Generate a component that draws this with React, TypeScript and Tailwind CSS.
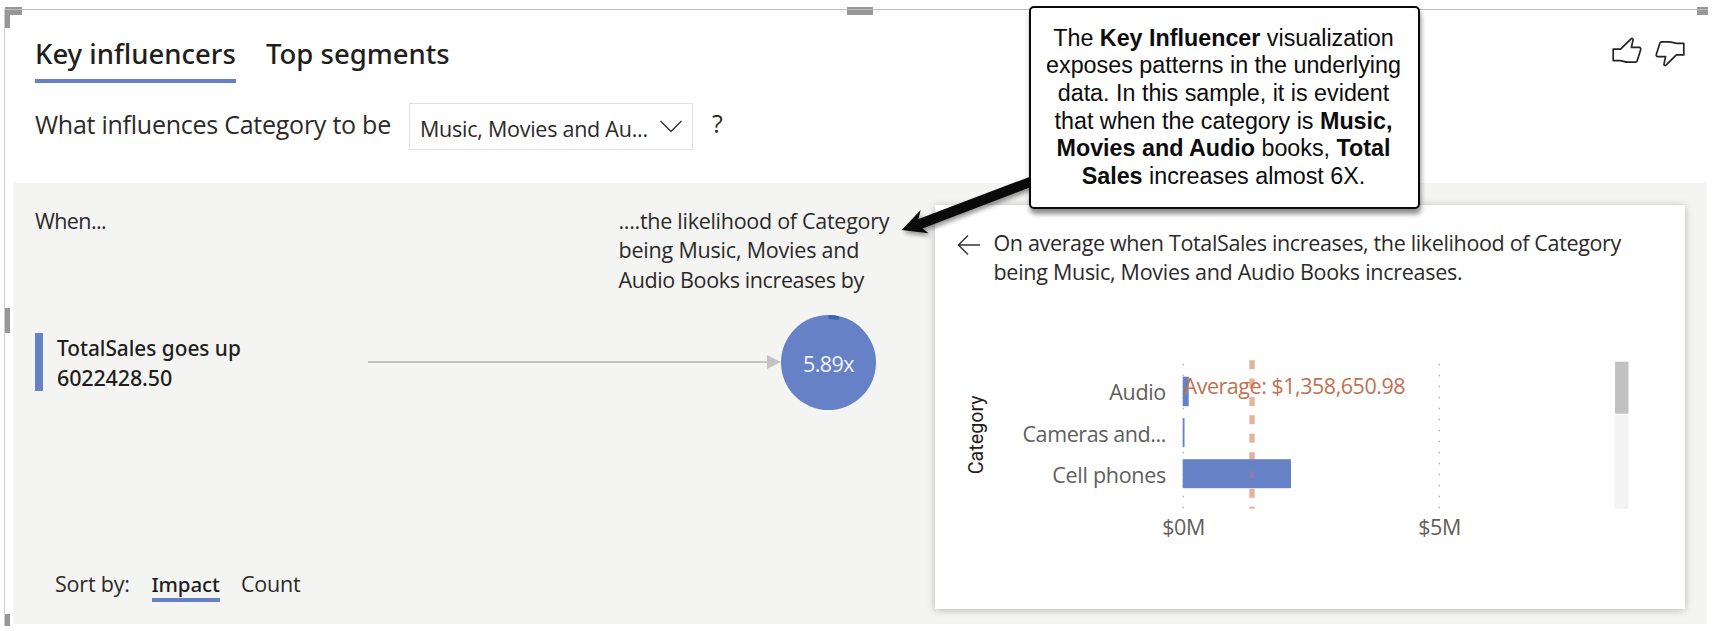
import React from "react";

const gridRows = Array.from({ length: 14 }, (_, i) => 363.6 + i * 11);
const averageDashes = [360, 378.3, 396.7, 415, 433.5, 452, 470.4, 488.6];

function Handle({ className }: { className: string }) {
  return <div className={`absolute bg-[#979797] ${className}`} />;
}

function SelectionFrame() {
  return (
    <>
      <Handle className="left-[5px] top-[7px] h-[8px] w-[17px]" />
      <Handle className="left-[5px] top-[15px] h-[13px] w-[4.5px]" />
      <Handle className="left-[847px] top-[7px] h-[8px] w-[26px]" />
      <Handle className="left-[1697px] top-[7px] h-[8px] w-[11px]" />
      <Handle className="left-[5px] top-[308px] h-[25px] w-[4.5px]" />
      <Handle className="left-[5px] top-[614px] h-[12px] w-[4.5px]" />
      <div className="absolute left-[4px] top-[9px] h-px w-[1704px] bg-[#bcbcbc]" />
      <div className="absolute left-[4px] top-[9px] h-[617px] w-px bg-[#cfcfcf]" />
    </>
  );
}

function Thumb({ className }: { className: string }) {
  return (
    <svg viewBox="0 0 30 27" className={`h-[27px] w-[30px] ${className}`} fill="none" stroke="#252423" strokeWidth="1.7" strokeLinejoin="round">
      <path d="M1.2 12.2H8.6L19 1.8C20 1 21.4 1.7 21 3.1L19.4 10.4H27C28.3 10.4 29 11.2 28.7 12.4L25.2 23.7C24.9 24.8 24.3 25.2 23.3 25.2H16C12.5 25.1 10.8 23.6 8 23.6H1.2Z" />
    </svg>
  );
}

function Header() {
  return (
    <header className="flex h-[183px] justify-between pl-[35px] pr-[28px]">
      <div className="flex flex-col">
        <nav className="mt-[32px] flex gap-[30px] text-[27.5px] font-medium leading-[44px] text-[#1f1e1d] [font-family:'Noto_Sans','Open_Sans',sans-serif]">
          <span className="h-[51px] w-[201px] whitespace-nowrap border-b-4 border-[#6681c5]">Key influencers</span>
          <span className="whitespace-nowrap">Top segments</span>
        </nav>
        <div className="mt-[20px] flex">
          <span className="mt-[3.5px] w-[374px] whitespace-nowrap text-[25px] leading-[34px] tracking-[-0.25px]">What influences Category to be</span>
          <div className="flex h-[47px] w-[284px] items-center justify-between border border-[#e2e2e2] pl-[10px] pr-[10px] text-[21.5px] leading-[29px] tracking-[-0.25px]">
            <span className="mt-[4px]">Music, Movies and Au...</span>
            <svg viewBox="0 0 22 13" className="h-[13px] w-[22px]" fill="none" stroke="#333" strokeWidth="1.4">
              <path d="M0.5 1L11 11.6L21.5 1" />
            </svg>
          </div>
          <span className="ml-[19px] mt-[3px] text-[25px] leading-[34px]">?</span>
        </div>
      </div>
      <div className="flex gap-[13.5px] pt-[37px]">
        <Thumb className="" />
        <Thumb className="mt-[3px] rotate-180" />
      </div>
    </header>
  );
}

function Influencers() {
  return (
    <div className="flex w-[921.5px] flex-col pl-[22px] pt-[23px] text-[21.5px] leading-[29.33px]">
      <div className="flex h-[88px]">
        <span className="w-[583.5px] tracking-[-0.6px]">When...</span>
        <div className="flex flex-col whitespace-nowrap">
          <span className="tracking-[-0.28px]">....the likelihood of Category</span>
          <span className="tracking-[-0.2px]">being Music, Movies and</span>
          <span className="tracking-[-0.38px]">Audio Books increases by</span>
        </div>
      </div>
      <div className="mt-[20.7px] flex h-[95px] items-center">
        <div className="h-[58.5px] w-[7.5px] bg-[#6681c5]" />
        <div className="ml-[14.5px] mt-[2px] flex w-[311px] flex-col text-[20.8px] font-medium text-[#1f1e1d] [font-family:'Noto_Sans','Open_Sans',sans-serif]">
          <span>TotalSales goes up</span>
          <span className="text-[21.5px] tracking-[-0.15px]">6022428.50</span>
        </div>
        <svg viewBox="0 0 413 16" className="h-[16px] w-[413px] shrink-0">
          <path d="M0 8H400" stroke="#c4c4c4" strokeWidth="2" />
          <path d="M399 1V15L413 8Z" fill="#c4c4c4" />
        </svg>
        <div className="relative flex h-[95px] w-[95px] shrink-0 items-center justify-center rounded-full bg-[#6681c5] text-[21.5px] tracking-[-0.6px] text-[#f2f4fb]">
          <svg viewBox="0 0 95 95" className="absolute inset-0 h-[95px] w-[95px]" fill="none">
            <path d="M47.5 2A45.5 45.5 0 0 1 57.8 3.2" stroke="#3f62b8" strokeWidth="4" />
          </svg>
          <span className="mt-[2px]">5.89x</span>
        </div>
      </div>
      <div className="mt-[160.5px] flex pl-[20px] leading-[28px]">
        <span className="w-[96.5px] tracking-[-0.2px]">Sort by:</span>
        <span className="h-[32px] w-[68px] border-b-4 border-[#6681c5] text-[20.5px] font-medium tracking-[-0.15px] text-[#1f1e1d] [font-family:'Noto_Sans','Open_Sans',sans-serif]">Impact</span>
        <span className="ml-[21.5px] tracking-[-0.2px]">Count</span>
      </div>
    </div>
  );
}

function Chart() {
  return (
    <svg viewBox="935 289.8 750 319" className="h-[319px] w-[750px]" fontSize="21.5" fill="#605e5c">
      {gridRows.map((y) => (
        <g key={y} fill="#b0b0b0">
          <rect x="1182.6" y={y} width="1.5" height="1.5" />
          <rect x="1438.6" y={y} width="1.5" height="1.5" />
        </g>
      ))}
      <g fill="#e3b49b">
        {averageDashes.map((y) => (
          <rect key={y} x="1249.3" y={y} width="5.4" height="9" />
        ))}
        <rect x="1249.3" y="506.5" width="5.4" height="2" />
      </g>
      <g fill="#6681c5">
        <rect x="1182.7" y="376.5" width="6" height="29.5" />
        <rect x="1182.7" y="418" width="1.8" height="29" />
        <rect x="1182.7" y="459" width="108.3" height="29" />
      </g>
      <rect x="1250" y="471" width="4" height="8" fill="#8d7bb0" />
      <g textAnchor="end">
        <text x="1166" y="400" letterSpacing="-0.3">Audio</text>
        <text x="1166" y="441.7" letterSpacing="-0.41">Cameras and...</text>
        <text x="1166" y="482.7" letterSpacing="-0.28">Cell phones</text>
      </g>
      <text x="1183.5" y="393.7" letterSpacing="-0.465" fill="#c0714f">Average: $1,358,650.98</text>
      <g textAnchor="middle" letterSpacing="-0.4">
        <text x="1183.5" y="535">$0M</text>
        <text x="1439.5" y="535">$5M</text>
      </g>
      <text transform="translate(983 474) rotate(-90)" fontSize="19.7" letterSpacing="0" fill="#1f1e1d" fontFamily="Roboto, sans-serif">Category</text>
      <rect x="1614" y="415" width="14.5" height="93.5" fill="#f4f4f4" />
      <rect x="1615" y="361.5" width="13.5" height="52" fill="#c1c1c1" />
    </svg>
  );
}

function DetailCard() {
  return (
    <div className="mt-[22px] flex h-[404px] w-[750px] flex-col bg-white shadow-[0_1px_8px_rgba(0,0,0,0.25)]">
      <div className="flex h-[85px] pl-[22.5px] pt-[23px] text-[21.5px] leading-[29.33px]">
        <svg viewBox="0 0 24 20" className="mt-[6.5px] h-[20px] w-[24px]" fill="none" stroke="#333" strokeWidth="1.4">
          <path d="M23 10H1.2M11 0.6L1.4 10L11 19.4" />
        </svg>
        <div className="ml-[12.5px] flex flex-col whitespace-nowrap">
          <span className="tracking-[-0.35px]">On average when TotalSales increases, the likelihood of Category</span>
          <span className="tracking-[-0.28px]">being Music, Movies and Audio Books increases.</span>
        </div>
      </div>
      <Chart />
    </div>
  );
}

function Callout() {
  return (
    <>
      <svg viewBox="890 165 150 80" className="absolute left-[890px] top-[165px] h-[80px] w-[150px] drop-shadow-[2px_3px_2px_rgba(0,0,0,0.4)]">
        <path d="M1034 175.2L918.5 219L920.7 210L901.7 230L928.7 233.3L922.5 228.6L1034 185.8Z" fill="#0a0a0a" />
      </svg>
      <div className="absolute left-[1029px] top-[6px] h-[203px] w-[391px] rounded-[5px] border-2 border-[#0a0a0a] bg-white pr-[2px] pt-[16.5px] text-center text-[23.3px] leading-[27.7px] text-[#0c0c0c] shadow-[1px_5px_5px_rgba(0,0,0,0.45)] [font-family:'Liberation_Sans',Arial,sans-serif]">
        The <b>Key Influencer</b> visualization<br />
        exposes patterns in the underlying<br />
        data. In this sample, it is evident<br />
        that when the category is <b>Music,</b><br />
        <b>Movies and Audio</b> books, <b>Total</b><br />
        <b>Sales</b> increases almost 6X.
      </div>
    </>
  );
}

export default function App() {
  return (
    <main className="relative flex h-[631px] w-[1713px] flex-col overflow-hidden bg-white text-[#2b2a29] [font-family:'Open_Sans','Noto_Sans',sans-serif]">
      <Header />
      <section className="ml-[13px] flex h-[441px] w-[1694px] bg-[#f4f4f3]">
        <Influencers />
        <DetailCard />
      </section>
      <SelectionFrame />
      <Callout />
    </main>
  );
}
